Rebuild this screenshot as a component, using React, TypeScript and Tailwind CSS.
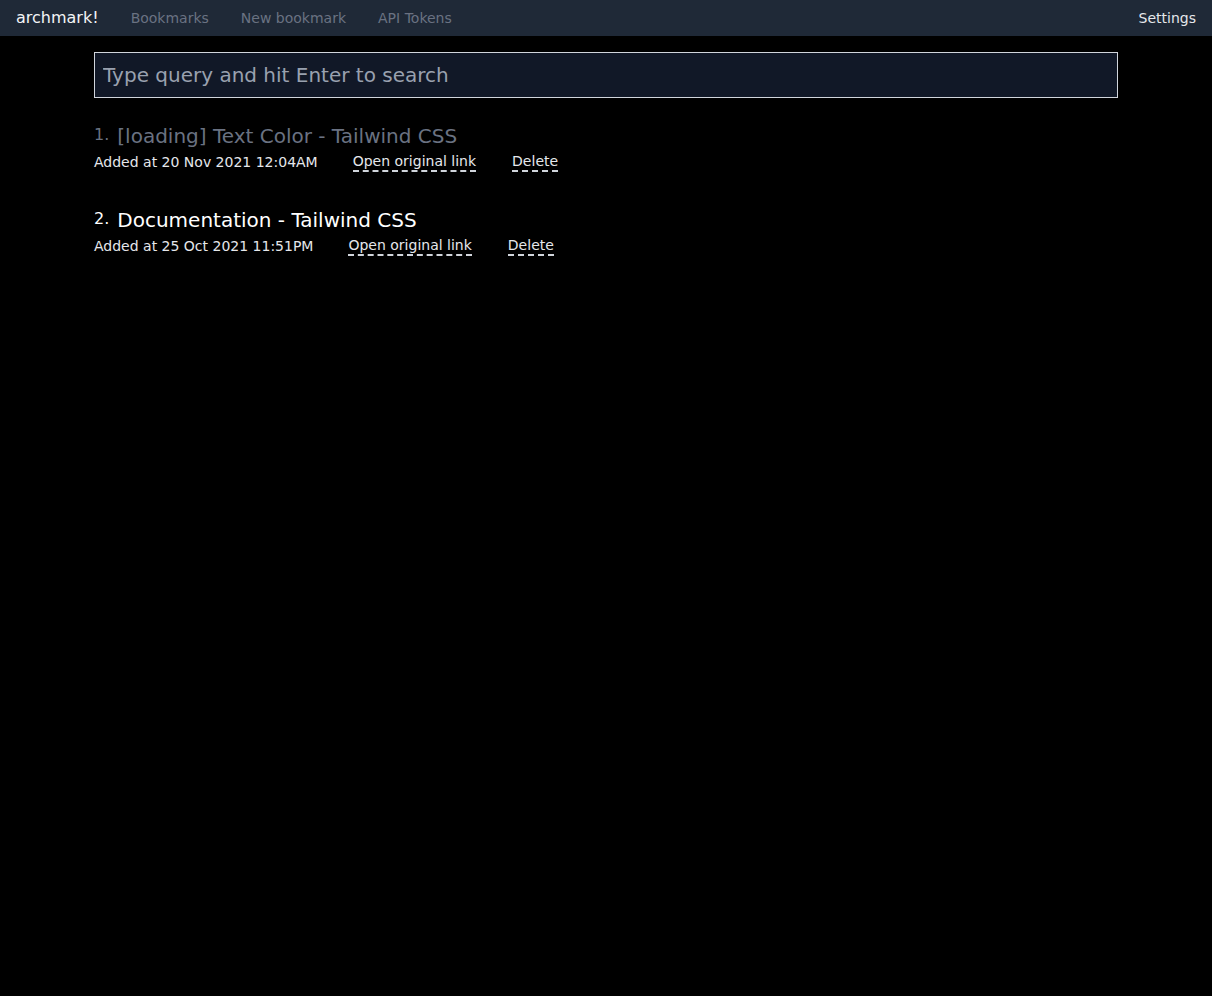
import React from "react";

const items = [
  { n: 1, title: "[loading] Text Color - Tailwind CSS", loading: true, date: "20 Nov 2021 12:04AM" },
  { n: 2, title: "Documentation - Tailwind CSS", loading: false, date: "25 Oct 2021 11:51PM" },
];

export default function App() {
  return (
    <div className="min-h-[996px] bg-black text-white" style={{ fontFamily: '"DejaVu Sans", sans-serif' }}>
      <nav className="h-9 bg-[#1f2937] flex items-center px-4">
        <span className="text-base text-gray-100">archmark!</span>
        <a className="ml-8 text-sm text-gray-500">Bookmarks</a>
        <a className="ml-8 text-sm text-gray-500">New bookmark</a>
        <a className="ml-8 text-sm text-gray-500">API Tokens</a>
        <a className="ml-auto text-sm text-gray-200">Settings</a>
      </nav>
      <main className="max-w-5xl mx-auto pt-4">
        <input
          className="w-full h-[46px] bg-[#111827] border border-gray-300 px-2 text-xl text-white placeholder:text-gray-400 outline-none"
          placeholder="Type query and hit Enter to search"
        />
        <div className="mt-6 flex flex-col gap-[34px]">
          {items.map((it) => (
            <div key={it.n}>
              <div className="flex items-center">
                <span className={`text-base leading-6 mr-2 -mt-[3px] ${it.loading ? "text-gray-500" : "text-white"}`}>{it.n}.</span>
                <span className={`text-xl leading-7 ${it.loading ? "text-gray-500" : "text-white"}`}>{it.title}</span>
              </div>
              <div className="mt-[2px] h-5 text-sm leading-5 text-gray-200 flex items-start">
                <span>Added at {it.date}</span>
                <a className="ml-[35px] pt-px border-b-2 border-dashed border-gray-300 leading-[17px]">Open original link</a>
                <a className="ml-9 pt-px border-b-2 border-dashed border-gray-300 leading-[17px]">Delete</a>
              </div>
            </div>
          ))}
        </div>
      </main>
    </div>
  );
}
